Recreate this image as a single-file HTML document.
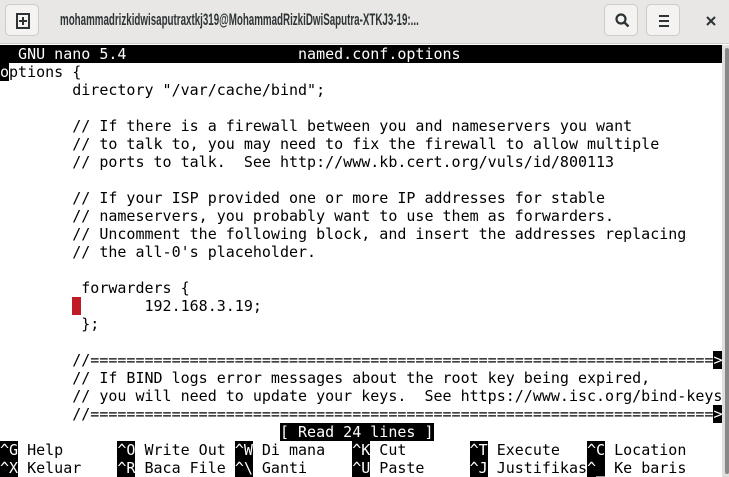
<!DOCTYPE html>
<html><head><style>
*{margin:0;padding:0;box-sizing:border-box}
body{width:729px;height:477px;overflow:hidden;background:#fff;position:relative;font-family:"Liberation Sans",sans-serif}
#tb{position:absolute;left:0;top:0;width:729px;height:44px;background:#e8e7e5;border-bottom:1px solid #cfcdca}
.btn{position:absolute;top:4px;width:34px;height:32px;border:1px solid #cdcbc8;border-radius:5px;background:#f4f3f2}
#title{position:absolute;left:60px;top:10px;font-size:17px;color:#2e3436;white-space:nowrap;transform:scaleX(0.575);transform-origin:0 0;font-weight:bold}
#term{position:absolute;left:0;top:45px;width:722px;height:432px;font-family:"DejaVu Sans Mono","Liberation Mono",monospace;font-size:15px;line-height:18px;color:#000}
.r{height:18px;overflow:hidden;white-space:pre}
.i{background:#000;color:#fff}
.red{background:#c01c28}
#sb{position:absolute;left:722px;top:45px;width:7px;height:432px;background:#e0dfdd}
#th{position:absolute;left:725px;top:48px;width:4px;height:426px;background:#888;border-radius:2px}
</style></head><body>
<div id="tb">
<div class="btn" style="left:5px"><svg width="34" height="32" viewBox="0 0 34 32"><rect x="11" y="9" width="12" height="14" fill="none" stroke="#2e3436" stroke-width="2"/><path d="M17 12v8M13 16h8" stroke="#2e3436" stroke-width="2"/></svg></div>
<div id="title">mohammadrizkidwisaputraxtkj319@MohammadRizkiDwiSaputra-XTKJ3-19:...</div>
<div class="btn" style="left:604px"><svg width="34" height="32" viewBox="0 0 34 32"><circle cx="16" cy="14" r="4.5" fill="none" stroke="#2e3436" stroke-width="2.2"/><path d="M19.5 17.5l4 4" stroke="#2e3436" stroke-width="2.4"/></svg></div>
<div class="btn" style="left:646px"><svg width="34" height="32" viewBox="0 0 34 32"><path d="M12 11h10M12 16h10M12 21h10" stroke="#2e3436" stroke-width="2"/></svg></div>
<svg style="position:absolute;left:704px;top:14px" width="14" height="14" viewBox="0 0 14 14"><path d="M3 3l8 8M11 3l-8 8" stroke="#2e3436" stroke-width="2"/></svg>
</div>
<div id="term"><div class="r i">  GNU nano 5.4                   named.conf.options                              </div><div class="r"><span class="i">o</span>ptions {</div><div class="r">        directory "/var/cache/bind";</div><div class="r"> </div><div class="r">        // If there is a firewall between you and nameservers you want</div><div class="r">        // to talk to, you may need to fix the firewall to allow multiple</div><div class="r">        // ports to talk.  See http://www.kb.cert.org/vuls/id/800113</div><div class="r"> </div><div class="r">        // If your ISP provided one or more IP addresses for stable</div><div class="r">        // nameservers, you probably want to use them as forwarders.</div><div class="r">        // Uncomment the following block, and insert the addresses replacing</div><div class="r">        // the all-0's placeholder.</div><div class="r"> </div><div class="r">         forwarders {</div><div class="r">        <span class="red"> </span>       192.168.3.19;</div><div class="r">         };</div><div class="r"> </div><div class="r">        //=====================================================================<span class="i">&gt;</span></div><div class="r">        // If BIND logs error messages about the root key being expired,</div><div class="r">        // you will need to update your keys.  See https://www.isc.org/bind-keys</div><div class="r">        //=====================================================================<span class="i">&gt;</span></div><div class="r">                               <span class="i">[ Read 24 lines ]</span></div><div class="r"><span class="i">^G</span> Help      <span class="i">^O</span> Write Out <span class="i">^W</span> Di mana   <span class="i">^K</span> Cut       <span class="i">^T</span> Execute   <span class="i">^C</span> Location</div><div class="r"><span class="i">^X</span> Keluar    <span class="i">^R</span> Baca File <span class="i">^\</span> Ganti     <span class="i">^U</span> Paste     <span class="i">^J</span> Justifikas<span class="i">^_</span> Ke baris</div></div>
<div id="sb"></div><div id="th"></div>
</body></html>
